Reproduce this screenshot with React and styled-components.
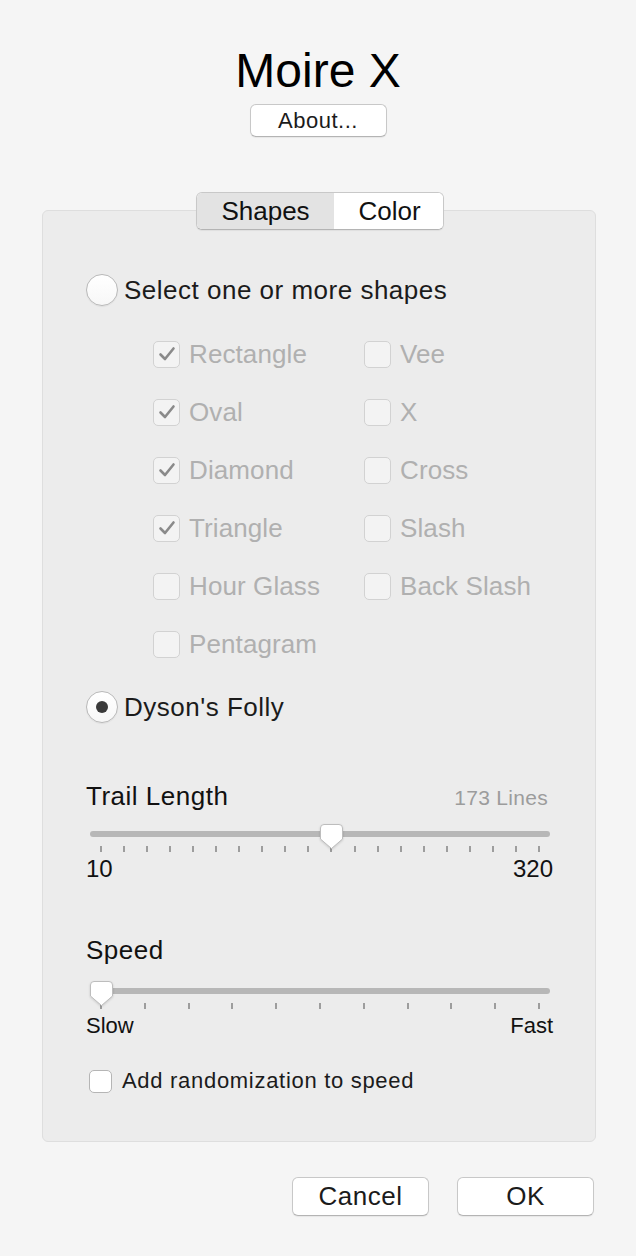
import React from "react";
import styled, { createGlobalStyle } from "styled-components";

const GlobalStyle = createGlobalStyle`
  html, body {
    margin: 0;
    padding: 0;
    background: #f5f5f5;
  }
  body {
    font-family: "Liberation Sans", Arial, sans-serif;
    color: #1b1b1b;
  }
`;

const Page = styled.div`
  width: 636px;
  min-height: 1256px;
  display: flex;
  flex-direction: column;
  align-items: center;
`;

const Title = styled.h1`
  margin: 43px 0 0;
  font-size: 48px;
  line-height: 56px;
  font-weight: 400;
  color: #000;
`;

const PushButton = styled.button`
  width: 137px;
  height: ${(p) => p.$h || 33}px;
  margin-top: ${(p) => p.$mt || 0}px;
  background: #fff;
  border: 1px solid #c8c8c8;
  border-bottom-color: #b4b4b4;
  border-radius: 6px;
  box-shadow: 0 1px 1px rgba(0, 0, 0, 0.06);
  font-family: inherit;
  font-size: ${(p) => p.$fs || 22}px;
  letter-spacing: 0.5px;
  color: #1b1b1b;
  padding: 0;
`;

const Tabs = styled.div`
  position: relative;
  z-index: 1;
  margin: 55px 0 0 4px;
  display: flex;
  width: 248px;
  height: 38px;
  box-sizing: border-box;
  border: 1px solid #c8c8c8;
  border-bottom-color: #b4b4b4;
  border-radius: 6px;
  overflow: hidden;
  background: #fff;
  box-shadow: 0 1px 1px rgba(0, 0, 0, 0.06);
`;

const Tab = styled.div`
  flex: 0 0 ${(p) => p.$w}px;
  display: flex;
  align-items: center;
  justify-content: center;
  font-size: 26px;
  color: #111;
  background: ${(p) => (p.$active ? "#e3e3e3" : "#fff")};
`;

const Panel = styled.div`
  margin: -20px 0 0 2px;
  width: 554px;
  height: 932px;
  box-sizing: border-box;
  background: #ececec;
  border: 1px solid #dedede;
  border-radius: 6px;
  padding: 63px 44px 0 43px;
  display: flex;
  flex-direction: column;
`;

const RadioRow = styled.div`
  display: flex;
  align-items: center;
  gap: 6px;
  height: 32px;
  font-size: 26px;
  letter-spacing: 0.5px;
  color: #1b1b1b;
  margin-top: ${(p) => p.$mt || 0}px;
`;

const RadioCircle = styled.span`
  width: 32px;
  height: 32px;
  box-sizing: border-box;
  border-radius: 50%;
  background: linear-gradient(#ffffff, #f7f7f7);
  border: 1px solid #b9b9b9;
  box-shadow: 0 1px 1px rgba(0, 0, 0, 0.05);
  display: flex;
  align-items: center;
  justify-content: center;

  &::after {
    content: "";
    display: ${(p) => (p.$on ? "block" : "none")};
    width: 12px;
    height: 12px;
    border-radius: 50%;
    background: #3a3a3a;
  }
`;

const ShapeGrid = styled.div`
  display: grid;
  grid-template-columns: 211px 180px;
  grid-auto-rows: 58px;
  margin: 33px 0 0 67px;
`;

const CheckRow = styled.label`
  display: flex;
  align-items: center;
  gap: ${(p) => p.$gap || 9}px;
  height: ${(p) => p.$h || 30}px;
  margin: ${(p) => p.$margin || 0};
  font-size: ${(p) => p.$fs || 26}px;
  letter-spacing: ${(p) => p.$ls ?? 0.1}px;
  color: ${(p) => (p.$disabled ? "#b0b0b0" : "#1b1b1b")};
`;

const Box = styled.span`
  width: ${(p) => p.$size}px;
  height: ${(p) => p.$size}px;
  flex: 0 0 auto;
  box-sizing: border-box;
  border-radius: 5px;
  border: 1px solid ${(p) => (p.$disabled ? "#d2d2d2" : "#b5b5b5")};
  background: ${(p) => (p.$disabled ? "#f3f3f3" : "#fff")};
  display: flex;
  align-items: center;
  justify-content: center;
`;

const SliderBlock = styled.div`
  margin-top: ${(p) => p.$mt}px;
  display: flex;
  flex-direction: column;
`;

const SliderHead = styled.div`
  display: flex;
  justify-content: space-between;
  align-items: baseline;
  font-size: 26px;
  line-height: 30px;
  letter-spacing: 0.5px;
  color: #111;
  padding-right: 3px;
`;

const ValueNote = styled.span`
  font-size: 21px;
  letter-spacing: 0.3px;
  color: #9c9c9c;
`;

const SliderArea = styled.div`
  position: relative;
  margin: ${(p) => p.$mt}px 0 0 4px;
  padding-top: 7px;
  width: 460px;
  height: 28px;
  box-sizing: border-box;
`;

const Track = styled.div`
  height: 6px;
  border-radius: 3px;
  background: #b7b7b7;
`;

const Ticks = styled.div`
  display: flex;
  justify-content: space-between;
  padding: 0 10px;
  margin-top: 9px;
`;

const Tick = styled.span`
  width: 2px;
  height: 6px;
  background: #9d9d9d;
`;

const Knob = styled.svg`
  position: absolute;
  top: 0;
  filter: drop-shadow(0 1px 1px rgba(0, 0, 0, 0.15));
`;

const Ends = styled.div`
  display: flex;
  justify-content: space-between;
  font-size: ${(p) => p.$fs}px;
  line-height: ${(p) => p.$fs + 2}px;
  color: #111;
  margin-top: ${(p) => p.$mt}px;
  width: 467px;
`;

const Footer = styled.div`
  width: 552px;
  display: flex;
  justify-content: flex-end;
  gap: 28px;
  margin-top: 35px;
`;

function Check({ checked, disabled, size = 27 }) {
  return (
    <Box $size={size} $disabled={disabled}>
      {checked && (
        <svg width="18" height="16" viewBox="0 0 18 16">
          <path
            d="M2.5 8.5 L7 13 L15.5 2.5"
            fill="none"
            stroke="#8a8a8a"
            strokeWidth="2.6"
            strokeLinecap="round"
            strokeLinejoin="round"
          />
        </svg>
      )}
    </Box>
  );
}

function Slider({ value, ticks, top }) {
  const left = value * (460 - 23);
  return (
    <SliderArea $mt={top}>
      <Track />
      <Ticks>
        {Array.from({ length: ticks }).map((_, i) => (
          <Tick key={i} />
        ))}
      </Ticks>
      <Knob width="23" height="26" viewBox="0 0 23 26" style={{ left }}>
        <path
          d="M4 0.5 H19 A3.5 3.5 0 0 1 22.5 4 V15 L11.5 24.5 L0.5 15 V4 A3.5 3.5 0 0 1 4 0.5 Z"
          fill="#fff"
          stroke="#bdbdbd"
          strokeWidth="1"
        />
      </Knob>
    </SliderArea>
  );
}

const shapes = [
  ["Rectangle", true],
  ["Vee", false],
  ["Oval", true],
  ["X", false],
  ["Diamond", true],
  ["Cross", false],
  ["Triangle", true],
  ["Slash", false],
  ["Hour Glass", false],
  ["Back Slash", false],
  ["Pentagram", false],
];

export default function App() {
  return (
    <Page>
      <GlobalStyle />
      <Title>Moire X</Title>
      <PushButton $mt={5}>About...</PushButton>

      <Tabs>
        <Tab $w={137} $active>
          Shapes
        </Tab>
        <Tab $w={111}>Color</Tab>
      </Tabs>

      <Panel>
        <RadioRow>
          <RadioCircle />
          Select one or more shapes
        </RadioRow>

        <ShapeGrid>
          {shapes.map(([name, on]) => (
            <CheckRow key={name} $disabled>
              <Check checked={on} disabled />
              {name}
            </CheckRow>
          ))}
        </ShapeGrid>

        <RadioRow $mt={4}>
          <RadioCircle $on />
          Dyson's Folly
        </RadioRow>

        <SliderBlock $mt={58}>
          <SliderHead>
            <span>Trail Length</span>
            <ValueNote>173 Lines</ValueNote>
          </SliderHead>
          <Slider value={(173 - 10) / 310} ticks={20} top={11} />
          <Ends $fs={24} $mt={4}>
            <span>10</span>
            <span>320</span>
          </Ends>
        </SliderBlock>

        <SliderBlock $mt={53}>
          <SliderHead>
            <span>Speed</span>
          </SliderHead>
          <Slider value={0} ticks={11} top={16} />
          <Ends $fs={22} $mt={5}>
            <span>Slow</span>
            <span>Fast</span>
          </Ends>
        </SliderBlock>

        <CheckRow $gap={10} $h={24} $fs={22} $ls={0.7} $margin="31px 0 0 3px">
          <Check size={23} />
          Add randomization to speed
        </CheckRow>
      </Panel>

      <Footer>
        <PushButton $h={39} $fs={26}>Cancel</PushButton>
        <PushButton $h={39} $fs={26}>OK</PushButton>
      </Footer>
    </Page>
  );
}
